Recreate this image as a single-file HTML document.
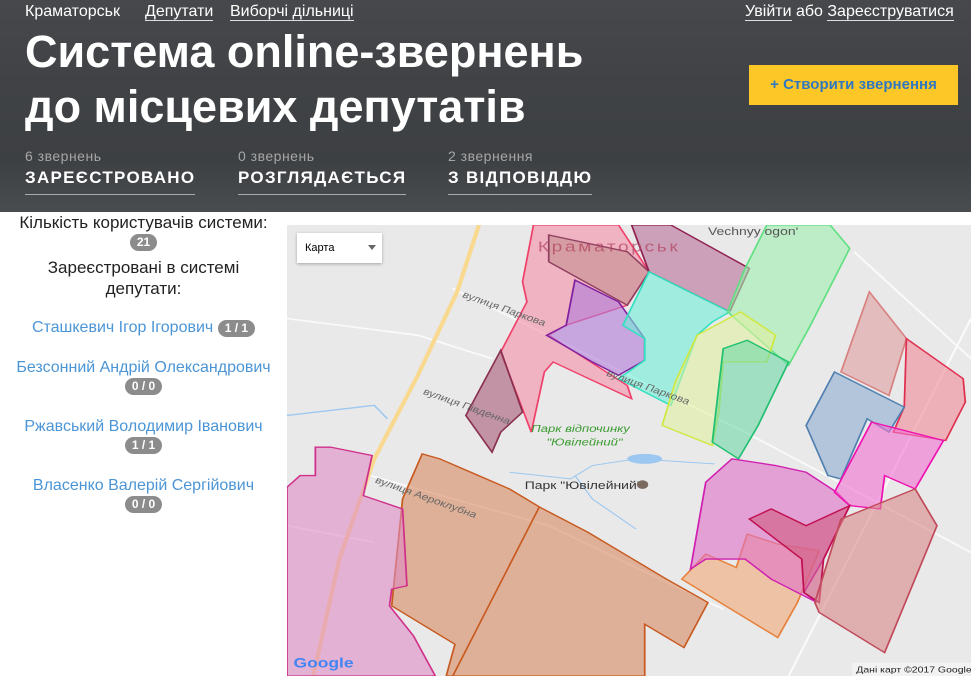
<!DOCTYPE html>
<html><head><meta charset="utf-8">
<style>
*{margin:0;padding:0;box-sizing:border-box}
body{width:971px;height:676px;overflow:hidden;background:#fff;font-family:"Liberation Sans",sans-serif;position:relative}
.hdr{position:absolute;left:0;top:0;width:971px;height:212px;background:linear-gradient(180deg,#46484b 0%,#404245 40%,#3d4043 75%,#4a4d50 100%);color:#fff}
.hdr a{color:#fff;text-decoration:none;border-bottom:1px solid #ddd}
.nav{position:absolute;top:2px;font-size:16px;line-height:20px}
h1{position:absolute;left:25px;top:24px;font-weight:bold;font-size:45px;line-height:55px;letter-spacing:0px}
.btn{position:absolute;left:749px;top:65px;width:209px;height:40px;background:#fdc727;color:#2f78c0;font-weight:bold;font-size:15px;text-align:center;line-height:40px}
.st{position:absolute;top:148px}
.st .s{font-size:14px;color:#a6a6a6;letter-spacing:.5px}
.st .b{margin-top:4px;font-size:17px;font-weight:bold;letter-spacing:1.3px;padding-bottom:6px;border-bottom:1px solid #aaa}
.side{position:absolute;left:0;top:212px;width:287px;text-align:center;font-size:16px;color:#222}
.bd{display:inline-block;background:#8c8c8c;color:#fff;font-weight:bold;font-size:12px;border-radius:9px;padding:1px 7px;line-height:15px}
.nm{color:#4b95d6}
.map{position:absolute;left:287px;top:225px;width:684px;height:451px;background:#e8e8e8;overflow:hidden}
</style></head><body>
<div class="hdr">
<div class="nav" style="left:25px;">Краматорськ</div>
<div class="nav" style="left:145px;"><a>Депутати</a></div>
<div class="nav" style="left:230px;"><a>Виборчі дільниці</a></div>
<div class="nav" style="left:745px;"><a>Увійти</a> або <a>Зареєструватися</a></div>
<h1>Система online-звернень<br>до місцевих депутатів</h1>
<div class="btn">+ Створити звернення</div>
<div class="st" style="left:25px"><div class="s">6 звернень</div><div class="b">ЗАРЕЄСТРОВАНО</div></div>
<div class="st" style="left:238px"><div class="s">0 звернень</div><div class="b">РОЗГЛЯДАЄТЬСЯ</div></div>
<div class="st" style="left:448px"><div class="s">2 звернення</div><div class="b">З ВІДПОВІДДЮ</div></div>
</div>
<div class="side">
<div style="margin-top:1px;line-height:20px;font-size:17px">Кількість користувачів системи:</div>
<div><span class="bd">21</span></div>
<div style="margin-top:6px;line-height:21px;font-size:17px">Зареєстровані в системі<br>депутати:</div>
<div style="margin-top:20px" class="nm">Сташкевич Ігор Ігорович <span class="bd">1 / 1</span></div>
<div style="margin-top:22px" class="nm">Безсонний Андрій Олександрович</div><div><span class="bd">0 / 0</span></div>
<div style="margin-top:23px" class="nm">Ржавський Володимир Іванович</div><div><span class="bd">1 / 1</span></div>
<div style="margin-top:23px" class="nm">Власенко Валерій Сергійович</div><div><span class="bd">0 / 0</span></div>
</div>
<div class="map">
<svg width="684" height="451" viewBox="0 0 1568 1350" preserveAspectRatio="none" style="position:absolute;left:0;top:0">
<rect width="1568" height="1350" fill="#e9e9e9"/>
<g stroke="#fafafa" stroke-width="5" fill="none">
<path d="M0 280 L300 330 L470 400"/><path d="M380 190 L1050 620 L1568 980"/><path d="M190 750 L600 900 L1000 1150"/>
<path d="M1300 80 L1568 400"/><path d="M1568 280 L1150 1350"/><path d="M0 900 L200 950"/>
</g>
<path d="M440 0 L390 200 L300 450 L200 700 L120 1000 L60 1350" stroke="#f8d98f" stroke-width="10" fill="none"/>
<path d="M0 570 L200 540 L230 580" stroke="#9cc7f0" stroke-width="4" fill="none"/>
<path d="M510 740 L650 760 L700 720 L800 700 L980 715 M660 750 L700 820 L800 910" stroke="#9cc7f0" stroke-width="3" fill="none"/>
<ellipse cx="820" cy="700" rx="40" ry="15" fill="#9cc7f0"/>
<g stroke-width="4" fill-opacity="0.6">
<path d="M310 685 L350 700 L430 745 L510 790 L580 845 L690 920 L870 1060 L965 1130 L910 1265 L820 1195 L820 1350 L365 1350 L385 1255 L240 1140 L265 820 L285 760Z" fill="#d98a63" stroke="#c85a20"/>
<path d="M578 845 L380 1350" stroke="#c85a20" fill="none"/>
<path d="M905 1060 L960 985 L1030 1025 L1055 925 L1125 955 L1220 975 L1170 1130 L1125 1235Z" fill="#f0a878" stroke="#e8803a"/>
<path d="M0 785 L30 750 L65 750 L65 665 L100 665 L195 690 L175 810 L265 850 L275 1080 L240 1090 L235 1140 L290 1230 L340 1350 L0 1350Z" fill="#e08cc4" stroke="#d0308a"/>
<path d="M565 0 L760 0 L830 140 L780 240 L640 300 L600 330 L780 480 L790 520 L610 410 L590 440 L560 620 L490 380 L550 230 L540 170Z" fill="#f58fa8" stroke="#f0406a"/>
<path d="M490 375 L540 560 L490 620 L470 680 L410 570Z" fill="#a85a78" stroke="#8a3050"/>
<path d="M660 165 L760 230 L820 340 L820 405 L760 450 L700 410 L595 330 L640 300Z" fill="#b07ad8" stroke="#8020a0"/>
<path d="M600 30 L780 80 L830 140 L780 240 L600 110Z" fill="#c49090" stroke="#904060"/>
<path d="M790 0 L880 0 L1060 130 L1015 260 L830 140Z" fill="#b87098" stroke="#902050"/>
<path d="M830 140 L1015 260 L975 290 L940 330 L880 540 L760 460 L820 405 L820 340 L770 300Z" fill="#70f0d8" stroke="#30e0c0"/>
<path d="M1100 0 L1245 0 L1290 70 L1200 300 L1150 420 L1010 260 L1050 130Z" fill="#a0f0b0" stroke="#60e080"/>
<path d="M940 330 L1040 260 L1120 330 L1100 410 L1000 410 L990 560 L975 660 L860 600 L890 470Z" fill="#e0f0a0" stroke="#d0e840"/>
<path d="M1000 370 L1055 345 L1150 410 L1080 600 L1035 700 L975 650Z" fill="#70d8a8" stroke="#20c070"/>
<path d="M960 770 L1020 700 L1120 720 L1190 740 L1260 800 L1290 840 L1230 1000 L1185 1100 L1215 1130 L1110 1060 L1050 1000 L960 1000 L925 1030Z" fill="#e070c8" stroke="#d020b0"/>
<path d="M1335 200 L1420 340 L1380 510 L1270 440Z" fill="#e0a0a0" stroke="#d88080"/>
<path d="M1420 340 L1550 460 L1555 530 L1510 645 L1390 620 L1415 545Z" fill="#f08898" stroke="#e03050"/>
<path d="M1255 440 L1415 545 L1380 620 L1330 580 L1270 760 L1240 750 L1190 600Z" fill="#90aed0" stroke="#5080b0"/>
<path d="M1340 590 L1505 645 L1440 790 L1370 750 L1360 850 L1290 840 L1255 800Z" fill="#f070d0" stroke="#f010b0"/>
<path d="M1060 880 L1110 850 L1190 900 L1290 840 L1230 1000 L1220 1130 L1185 1100 L1180 1000Z" fill="#d05a80" stroke="#c01050"/>
<path d="M1270 880 L1440 790 L1490 900 L1370 1280 L1220 1160 L1210 1130Z" fill="#d88888" stroke="#c04a5a"/>
</g>
<g font-family="Liberation Sans" fill="#666" font-size="28">
<text transform="translate(400,215) rotate(25)">вулиця Паркова</text>
<text transform="translate(310,505) rotate(25)">вулиця Південна</text>
<text transform="translate(200,770) rotate(25)">вулиця Аероклубна</text>
<text transform="translate(730,450) rotate(25)">вулиця Паркова</text>
</g>
<text x="575" y="80" font-size="44" fill="#b04060" fill-opacity="0.7" font-family="Liberation Sans" letter-spacing="6">Краматорськ</text>
<text x="560" y="620" font-size="30" fill="#3a9a30" font-style="italic" font-family="Liberation Sans">Парк відпочинку</text>
<text x="595" y="660" font-size="30" fill="#3a9a30" font-style="italic" font-family="Liberation Sans">"Ювілейний"</text>
<text x="545" y="790" font-size="32" fill="#333" font-family="Liberation Sans">Парк "Ювілейний"</text>
<circle cx="815" cy="777" r="13" fill="#7a6a60"/>
<text x="965" y="30" font-size="32" fill="#555" font-family="Liberation Sans">Vechnyy ogon'</text>
<text x="15" y="1325" font-size="40" font-weight="bold" fill="#4285f4" font-family="Liberation Sans">Google</text>
<rect x="1295" y="1310" width="273" height="40" fill="#f4f4f4" fill-opacity="0.8"/>
<text x="1305" y="1340" font-size="24" fill="#222" font-family="Liberation Sans">Дані карт ©2017 Google</text>
</svg>
<div style="position:absolute;left:10px;top:8px;width:85px;height:30px;background:#fff;box-shadow:0 1px 3px rgba(0,0,0,.3);font-size:11px;line-height:30px;padding-left:8px;color:#000">Карта<span style="position:absolute;right:6px;top:12px;border:4px solid transparent;border-top:5px solid #666"></span></div>
</div>
</body></html>
